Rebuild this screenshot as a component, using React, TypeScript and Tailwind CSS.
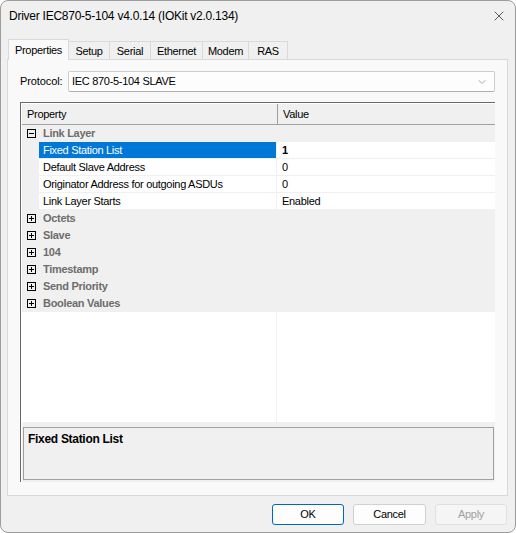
import { ChevronDown, X } from 'lucide-react';

const TABS = ['Properties', 'Setup', 'Serial', 'Ethernet', 'Modem', 'RAS'];
const TAB_WIDTHS = ['w-[61px]', 'w-[42px]', 'w-[42px]', 'w-[53px]', 'w-[47px]', 'w-[40px]'];

const LINK_ITEMS = [
  { name: 'Fixed Station List', value: '1', selected: true },
  { name: 'Default Slave Address', value: '0' },
  { name: 'Originator Address for outgoing ASDUs', value: '0' },
  { name: 'Link Layer Starts', value: 'Enabled' },
];

const COLLAPSED = ['Octets', 'Slave', '104', 'Timestamp', 'Send Priority', 'Boolean Values'];

function ExpandBox({ open }: { open: boolean }) {
  return (
    <svg width="9" height="9" viewBox="0 0 9 9" className="block">
      <rect x="0.5" y="0.5" width="8" height="8" fill="none" stroke="#000" />
      <line x1="2" y1="4.5" x2="7" y2="4.5" stroke="#000" />
      {!open && <line x1="4.5" y1="2" x2="4.5" y2="7" stroke="#000" />}
    </svg>
  );
}

function Category({ label, open }: { label: string; open: boolean }) {
  return (
    <div className="flex h-[17px] items-center bg-[#f0f0f0]">
      <div className="flex w-[17px] justify-center pl-[1px]">
        <ExpandBox open={open} />
      </div>
      <span className="pl-[4px] font-bold text-[#6d6d6d]">{label}</span>
    </div>
  );
}

export default function App() {
  return (
    <div
      className="flex h-[533px] w-[516px] flex-col overflow-hidden rounded-[8px] border border-[#9c9c9c] bg-[#f0f0f0] text-[11px] tracking-[-0.3px] text-black"
      style={{ fontFamily: '"Liberation Sans", Arial, sans-serif' }}
    >
      {/* title bar */}
      <div className="flex h-[30px] shrink-0 items-center justify-between pl-[8px] pr-[8px]">
        <span className="text-[12px] tracking-[-0.25px]">Driver IEC870-5-104 v4.0.14 (IOKit v2.0.134)</span>
        <X className="h-[16px] w-[16px] text-[#222]" strokeWidth={1.1} />
      </div>

      {/* tabs */}
      <div className="mt-[8px] flex h-[20px] items-end pl-[7px]">
        {TABS.map((t, i) =>
          i === 0 ? (
            <div
              key={t}
              className={`${TAB_WIDTHS[i]} relative z-10 -mb-px flex h-[21px] items-start justify-center border border-b-0 border-[#d9d9d9] bg-[#f9f9f9] pt-[2px]`}
            >
              {t}
            </div>
          ) : (
            <div
              key={t}
              className={`${TAB_WIDTHS[i]} -ml-px flex h-[18px] items-center justify-center border border-b-0 border-[#d9d9d9] bg-[#f0f0f0] pt-[1px]`}
            >
              {t}
            </div>
          ),
        )}
      </div>

      {/* panel */}
      <div className="ml-[6px] flex h-[437px] w-[501px] flex-col border border-[#d9d9d9] bg-[#f9f9f9] px-[12px]">
        <div className="mt-[11px] flex h-[21px] items-center">
          <span className="w-[48px] pr-[4px] tracking-[-0.1px]">Protocol:</span>
          <div className="flex h-[21px] flex-1 items-center justify-between rounded-[2px] border border-[#cdcdcd] border-b-[#b0b0b0] bg-[#fdfdfd] pl-[3px] pr-[6px]">
            <span>IEC 870-5-104 SLAVE</span>
            <ChevronDown className="h-[12px] w-[12px] text-[#555]" strokeWidth={1} />
          </div>
        </div>

        {/* property grid */}
        <div className="mt-[10px] flex h-[380px] w-[475px] flex-col border-l border-t border-[#696969] bg-white pl-px pt-px">
          <div className="flex h-[21px] shrink-0 border-b border-[#a0a0a0] bg-[#f0f0f0]">
            <div className="flex w-[256px] items-center border-r border-[#a0a0a0] pl-[5px]">Property</div>
            <div className="flex flex-1 items-center pl-[5px]">Value</div>
          </div>

          <Category label="Link Layer" open />
          {LINK_ITEMS.map((it) => (
            <div key={it.name} className="flex h-[17px] border-b border-[#f0f0f0]">
              <div className="w-[17px] bg-[#f0f0f0]" />
              <div
                className={`flex w-[238px] items-center border-r border-[#f0f0f0] pl-[4px] ${
                  it.selected ? 'bg-[#0078d7] text-white' : ''
                }`}
              >
                {it.name}
              </div>
              <div className={`flex flex-1 items-center pl-[5px] ${it.selected ? 'font-bold' : ''}`}>{it.value}</div>
            </div>
          ))}
          {COLLAPSED.map((c) => (
            <Category key={c} label={c} open={false} />
          ))}

          <div className="flex flex-1">
            <div className="w-[255px] border-r border-[#f0f0f0]" />
          </div>

          <div className="h-[60px] shrink-0 bg-[#f0f0f0] px-px pt-[5px]">
            <div className="h-[53px] border border-[#a0a0a0] pl-[4px] pt-[2px] text-[12px] font-bold">
              Fixed Station List
            </div>
          </div>
        </div>
      </div>

      {/* buttons */}
      <div className="mt-[8px] flex justify-end gap-[9px] pr-[8px]">
        <button className="h-[21px] w-[72px] rounded-[3px] border border-[#0067c0] bg-[#fdfdfd]">OK</button>
        <button className="h-[21px] w-[73px] rounded-[3px] border border-[#d0d0d0] bg-[#fdfdfd]">Cancel</button>
        <button className="h-[21px] w-[72px] rounded-[3px] border border-[#e0e0e0] bg-[#f5f5f5] text-[#a0a0a0]">Apply</button>
      </div>
    </div>
  );
}
